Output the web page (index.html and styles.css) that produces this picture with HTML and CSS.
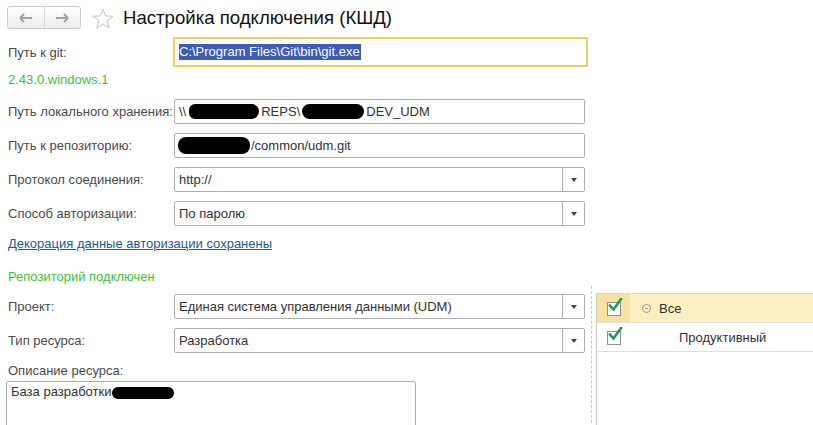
FILE: index.html
```html
<!DOCTYPE html>
<html lang="ru">
<head>
<meta charset="utf-8">
<title>Настройка подключения (КШД)</title>
<link rel="stylesheet" href="styles.css">
</head>
<body>
<div class="page">
  <header class="head">
    <div class="nav">
      <span class="navbtn"><svg width="14" height="10" viewBox="0 0 14 10"><path d="M1 5H13M1 5L5 1M1 5L5 9" stroke="#a0a0a0" stroke-width="2" fill="none"/></svg></span>
      <span class="navbtn"><svg width="14" height="10" viewBox="0 0 14 10"><path d="M1 5H13M13 5L9 1M13 5L9 9" stroke="#a0a0a0" stroke-width="2" fill="none"/></svg></span>
    </div>
    <svg class="star" width="22" height="21" viewBox="0 0 22 21"><path d="M11 1L13.6 7.9L21 8.2L15.2 12.8L17.2 20L11 15.9L4.8 20L6.8 12.8L1 8.2L8.4 7.9Z" fill="none" stroke="#c4c4c4" stroke-width="1"/></svg>
    <h1 class="title">Настройка подключения (КШД)</h1>
  </header>

  <div class="row row-git">
    <label class="lbl">Путь к git:</label>
    <div class="field field-git"><span class="sel">C:\Program Files\Git\bin\git.exe</span></div>
  </div>
  <div class="note green">2.43.0.windows.1</div>

  <div class="row row-first">
    <label class="lbl">Путь локального хранения:</label>
    <div class="field">\\<span class="blot b1"></span>REPS\<span class="blot b2"></span>DEV_UDM</div>
  </div>
  <div class="row">
    <label class="lbl">Путь к репозиторию:</label>
    <div class="field"><span class="blot b3"></span>/common/udm.git</div>
  </div>
  <div class="row">
    <label class="lbl">Протокол соединения:</label>
    <div class="field combo"><span class="val">http://</span><span class="drop"></span></div>
  </div>
  <div class="row">
    <label class="lbl">Способ авторизации:</label>
    <div class="field combo"><span class="val">По паролю</span><span class="drop"></span></div>
  </div>

  <a class="link" href="#">Декорация данные авторизации сохранены</a>
  <div class="note green note2">Репозиторий подключен</div>

  <div class="split">
    <div class="leftcol">
      <div class="row">
        <label class="lbl">Проект:</label>
        <div class="field combo"><span class="val">Единая система управления данными (UDM)</span><span class="drop"></span></div>
      </div>
      <div class="row">
        <label class="lbl">Тип ресурса:</label>
        <div class="field combo"><span class="val">Разработка</span><span class="drop"></span></div>
      </div>
      <div class="lbl desc-lbl">Описание ресурса:</div>
      <div class="textarea">База разработки <span class="blot b4"></span></div>
    </div>
    <div class="rightcol">
      <div class="table">
        <div class="trow active">
          <div class="cbcell"><span class="cb"><svg width="16" height="16" viewBox="0 0 16 16"><path d="M3 7.5L6.5 11.5L14 1" stroke="#1e9a50" stroke-width="2.6" fill="none" stroke-linecap="square"/></svg></span></div>
          <div class="tcell"><span class="minus"></span>Все</div>
        </div>
        <div class="trow">
          <div class="cbcell"><span class="cb"><svg width="16" height="16" viewBox="0 0 16 16"><path d="M3 7.5L6.5 11.5L14 1" stroke="#1e9a50" stroke-width="2.6" fill="none" stroke-linecap="square"/></svg></span></div>
          <div class="tcell indent">Продуктивный</div>
        </div>
      </div>
    </div>
  </div>
</div>
</body>
</html>
```

FILE: styles.css
```css
html, body {
  margin: 0;
  padding: 0;
  background: #fff;
  overflow: hidden;
}
body {
  font-family: "Liberation Sans", Arial, sans-serif;
  font-size: 13px;
  color: #4a4a4a;
  width: 813px;
  height: 425px;
}
.page {
  padding-top: 6px;
}
.head {
  display: flex;
  align-items: center;
  height: 23px;
  padding-left: 7px;
}
.nav {
  display: flex;
  width: 74px;
  height: 23px;
  box-sizing: border-box;
  border: 1px solid #cdcdcd;
  border-radius: 3px;
  background: linear-gradient(#ffffff, #ececec);
}
.navbtn {
  flex: 1;
  display: flex;
  align-items: center;
  justify-content: center;
}
.navbtn + .navbtn {
  border-left: 1px solid #d6d6d6;
}
.star {
  margin-left: 11px;
  margin-top: 1px;
}
.title {
  margin: 0 0 0 9px;
  font-size: 18.6px;
  font-weight: normal;
  color: #111;
  line-height: 23px;
}
.row {
  display: flex;
  align-items: center;
  height: 25px;
  margin-top: 9px;
  padding-left: 8px;
}
.row-first {
  margin-top: 11px;
}
.lbl {
  width: 166px;
  flex: none;
  color: #4a4a4a;
}
.field {
  width: 411px;
  height: 25px;
  box-sizing: border-box;
  border: 1px solid #aeaeae;
  border-radius: 2px;
  display: flex;
  align-items: center;
  padding-left: 4px;
  color: #333;
  white-space: nowrap;
  overflow: hidden;
}
.row-git {
  margin-top: 8px;
  height: 30px;
}
.field-git {
  width: 415px;
  height: 30px;
  margin-left: -1px;
  border: 2px solid #ecd25a;
  border-radius: 0;
  padding-left: 4px;
}
.sel {
  background: #3e5bb8;
  color: #fff;
  line-height: 16px;
  padding-right: 1px;
}
.note {
  padding-left: 8px;
  margin-top: 5px;
  line-height: 16px;
}
.green {
  color: #3cbf3c;
}
.blot {
  display: inline-block;
  background: #000;
  height: 15px;
  border-radius: 8px;
  vertical-align: middle;
}
.b1 { width: 70px; margin: 0 2px 0 3px; border-radius: 8px 10px 10px 8px; }
.b2 { width: 62px; margin: 0 2px 0 2px; }
.b3 { width: 72px; margin-left: -1px; margin-right: 1px; height: 17px; }
.b4 { width: 62px; height: 12px; border-radius: 6px; margin-left: -3px; }
.combo {
  padding-left: 4px;
  padding-right: 0;
}
.combo .val {
  flex: 1;
  overflow: hidden;
}
.drop {
  width: 21px;
  height: 100%;
  flex: none;
  border-left: 1px solid #aeaeae;
  position: relative;
}
.drop::after {
  content: "";
  position: absolute;
  left: 8px;
  top: 10px;
  border-left: 3px solid transparent;
  border-right: 3px solid transparent;
  border-top: 4px solid #444;
}
.link {
  display: inline-block;
  margin: 10px 0 0 8px;
  color: #1b5b8c;
  text-decoration: underline;
  line-height: 16px;
}
.note2 {
  margin-top: 17px;
}
.split {
  display: flex;
  margin-top: 1px;
}
.leftcol {
  width: 591px;
  flex: none;
}
.leftcol .row:first-child {
  margin-top: 8px;
}
.desc-lbl {
  padding-left: 8px;
  margin-top: 10px;
  line-height: 16px;
  width: auto;
}
.textarea {
  margin: 2px 0 0 6px;
  width: 410px;
  height: 60px;
  box-sizing: border-box;
  border: 1px solid #aeaeae;
  border-radius: 2px;
  padding: 2px 4px;
  color: #333;
}
.rightcol {
  flex: 1;
  border-left: 1px dashed #c8c8c8;
  padding-left: 4px;
  padding-top: 7px;
  height: 140px;
}
.table {
  border-left: 1px solid #c9c9c9;
  border-top: 1px solid #d8d8d8;
  height: 140px;
}
.trow {
  display: flex;
  height: 28px;
  border-bottom: 1px solid #dedede;
  align-items: stretch;
}
.trow.active {
  background: #fcefc1;
}
.trow.active .cbcell {
  background: #f8e2a0;
}
.cbcell {
  width: 33px;
  flex: none;
  display: flex;
  align-items: center;
  justify-content: center;
}
.cb {
  width: 14px;
  height: 14px;
  box-sizing: border-box;
  border: 1px solid #8f8f8f;
  background: #fff;
  position: relative;
  margin-top: 1px;
}
.cb svg {
  position: absolute;
  left: -1px;
  top: -5px;
}
.tcell {
  display: flex;
  align-items: center;
  color: #333;
  padding-left: 12px;
}
.tcell.indent {
  padding-left: 49px;
}
.minus {
  width: 9px;
  height: 9px;
  box-sizing: border-box;
  border: 1px solid #999;
  border-radius: 50%;
  margin-right: 8px;
  position: relative;
}
.minus::after {
  content: "";
  position: absolute;
  left: 2px;
  top: 3px;
  width: 3px;
  height: 1px;
  background: #999;
}
```
